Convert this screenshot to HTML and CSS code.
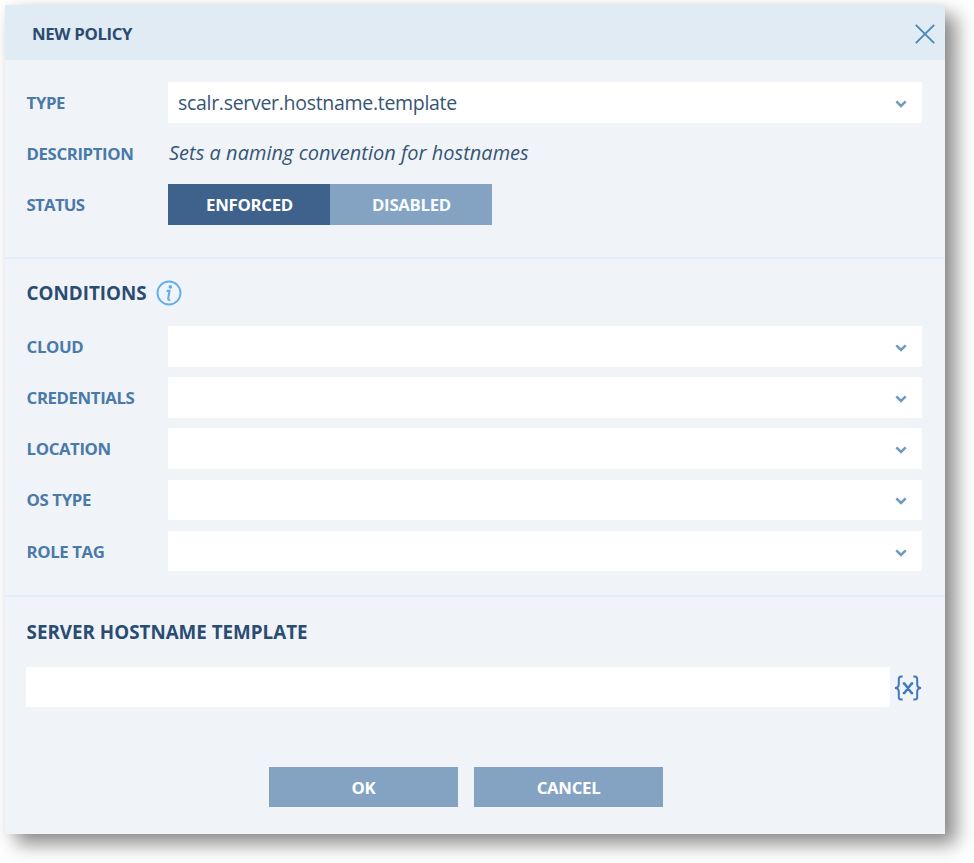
FILE: index.html
```html
<!DOCTYPE html>
<html lang="en">
<head>
<meta charset="utf-8">
<title>New Policy</title>
<link rel="stylesheet" href="styles.css">
</head>
<body>
<svg class="defs" aria-hidden="true"><symbol id="chevron" viewBox="0 0 12 8"><path d="M1.3 1.4 6 6 10.7 1.4" fill="none" stroke="#6f98c3" stroke-width="2.5"/></symbol></svg>
<main class="dialog">
  <header class="header">
    <h1 class="title">NEW POLICY</h1>
    <svg class="close" viewBox="0 0 20 20"><path d="M.8.8 19.2 19.2M19.2.8.8 19.2" fill="none" stroke="#4787b5" stroke-width="1.8"/></svg>
  </header>
  <section class="section general">
    <div class="row"><span class="label">TYPE</span><div class="select"><span class="value">scalr.server.hostname.template</span><svg class="chevron"><use href="#chevron"/></svg></div></div>
    <div class="row"><span class="label">DESCRIPTION</span><em class="text">Sets a naming convention for hostnames</em></div>
    <div class="row"><span class="label status">STATUS</span><div class="toggle"><span class="option active">ENFORCED</span><span class="option">DISABLED</span></div></div>
  </section>
  <section class="section conditions">
    <h2 class="heading"><span>CONDITIONS</span>
      <svg class="info" viewBox="0 0 26 26"><circle cx="13" cy="13" r="11.5" fill="none" stroke="#62aeea" stroke-width="1.9"/><circle cx="14.3" cy="6.9" r="1.8" fill="#62aeea"/><path d="M10.6 10.9H13.5L12.2 18.4Q12 20.2 14.2 19.9" fill="none" stroke="#62aeea" stroke-width="2.1"/></svg>
    </h2>
    <div class="row"><span class="label">CLOUD</span><div class="select"><svg class="chevron"><use href="#chevron"/></svg></div></div>
    <div class="row"><span class="label">CREDENTIALS</span><div class="select"><svg class="chevron"><use href="#chevron"/></svg></div></div>
    <div class="row"><span class="label">LOCATION</span><div class="select"><svg class="chevron"><use href="#chevron"/></svg></div></div>
    <div class="row"><span class="label">OS TYPE</span><div class="select"><svg class="chevron"><use href="#chevron"/></svg></div></div>
    <div class="row"><span class="label">ROLE TAG</span><div class="select"><svg class="chevron"><use href="#chevron"/></svg></div></div>
  </section>
  <section class="section template">
    <h2 class="heading">SERVER HOSTNAME TEMPLATE</h2>
    <div class="field"><div class="input"></div>
      <svg class="variable" viewBox="0 0 28 26"><path d="M8.7 1.4H7.2Q4.8 1.4 4.8 4V9.5Q4.8 12.7 1 13 4.8 13.3 4.8 16.5V22Q4.8 24.6 7.2 24.6H8.7M19.3 1.4H20.8Q23.2 1.4 23.2 4V9.5Q23.2 12.7 27 13 23.2 13.3 23.2 16.5V22Q23.2 24.6 20.8 24.6H19.3" fill="none" stroke="#4079bb" stroke-width="2"/><path d="M10 8 18 18.6M18 8 10 18.6M8.8 8.5H11.2M16.8 8.5H19.2M8.8 18.1H11.2M16.8 18.1H19.2" fill="none" stroke="#4079bb" stroke-width="2.4"/></svg>
    </div>
    <div class="actions"><button class="button">OK</button><button class="button">CANCEL</button></div>
  </section>
</main>
</body>
</html>
```
FILE: styles.css
```css
* { box-sizing: border-box; }
body { margin: 0; padding: 5px; height: 863px; overflow: hidden; background: #fff; font-family: "Open Sans", sans-serif; }
.defs { display: none; }
.dialog { width: 940px; height: 829px; background: #f0f4f9; box-shadow: 11px 10px 18px rgba(0,0,0,.46), 0 0 7px rgba(0,0,0,.05); }
.header { height: 55px; padding: 1px 10px 0 27px; display: flex; align-items: center; justify-content: space-between; background: #e0ebf4; }
.title { margin: 0; font-size: 16.8px; letter-spacing: -.35px; font-weight: 700; color: #2b4c72; }
.close { width: 20px; height: 20px; margin-top: 2px; }
.section { padding: 0 23px 0 21px; }
.section + .section { border-top: 2px solid #e2eef8; }
.general { height: 197px; padding-top: 22px; }
.row { height: 40.5px; margin-bottom: 10.7px; display: grid; grid-template-columns: 142px 1fr; align-items: center; }
.label { padding-left: .6px; font-size: 16.8px; letter-spacing: -.4px; font-weight: 700; color: #4a7aa8; white-space: nowrap; }
.status { letter-spacing: -.75px; }
.select { height: 40.5px; padding: 0 15.5px 0 10px; display: flex; align-items: center; background: #fff; color: #365474; font-size: 19.5px; }
.value { padding-top: 1px; letter-spacing: -.3px; }
.chevron { width: 12px; height: 8px; margin-left: auto; margin-top: 3px; }
.text { padding: 0 0 1px 1px; font-size: 20px; letter-spacing: .02px; color: #365474; }
.toggle { width: 324px; height: 40.5px; display: grid; grid-template-columns: 1fr 1fr; }
.option { display: flex; align-items: center; justify-content: center; padding: 0 0 0 1px; background: #84a3c3; color: #f7fbff; font-size: 16.8px; letter-spacing: -.3px; font-weight: 700; }
.active { background: #3e628c; color: #fff; }
.conditions { height: 338px; padding-top: 20px; }
.heading { margin: 0; padding-left: .6px; display: flex; align-items: center; font-size: 18.8px; line-height: 28px; font-weight: 700; color: #2b4c72; }
.conditions .heading { height: 28px; margin-bottom: 19px; }
.info { width: 26px; height: 26px; margin-left: 9.5px; }
.template { padding-top: 21px; }
.field { height: 40px; margin-top: 21px; display: flex; align-items: center; }
.input { width: 864px; height: 40px; background: #fff; }
.variable { width: 28px; height: 26px; margin: 2px 0 0 4.5px; }
.actions { margin-top: 60px; padding-right: 16px; display: flex; justify-content: center; gap: 16px; }
.button { width: 189px; height: 40px; padding: 0; border: 0; background: #84a3c3; color: #fff; font: 700 16.8px "Open Sans", sans-serif; letter-spacing: -.3px; }
```
